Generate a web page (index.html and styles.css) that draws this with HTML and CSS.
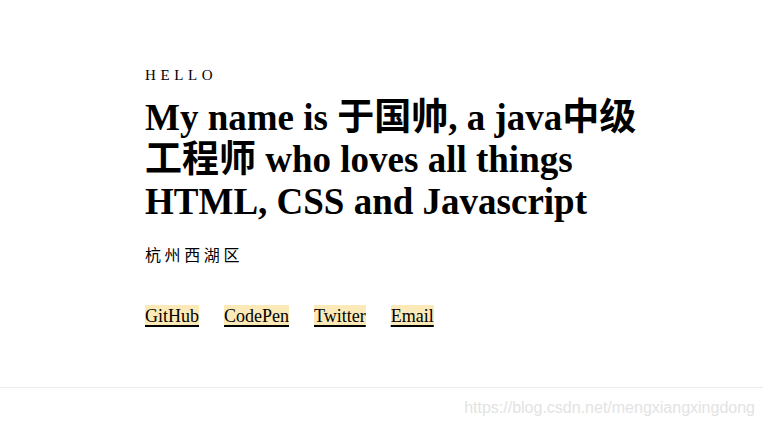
FILE: index.html
```html
<!DOCTYPE html>
<html lang="zh">
<head>
<meta charset="utf-8">
<title>Hello</title>
<link rel="stylesheet" href="styles.css">
</head>
<body>
<main class="intro">
  <p class="hello">HELLO</p>
  <h1 class="headline">My name is 于国帅, a java中级工程师 who loves all things HTML, CSS and Javascript</h1>
  <p class="location">杭州西湖区</p>
  <nav class="links">
    <a href="#">GitHub</a>
    <a href="#">CodePen</a>
    <a href="#">Twitter</a>
    <a href="#">Email</a>
  </nav>
</main>
<footer class="footer">
  <span class="watermark">https://blog.csdn.net/mengxiangxingdong</span>
</footer>
</body>
</html>
```
FILE: styles.css
```css
html, body {
  margin: 0;
  padding: 0;
  background: #fff;
  color: #000;
}
body {
  font-family: "Liberation Serif", "Noto Sans CJK SC", serif;
}
.intro {
  padding: 66px 0 0 145px;
  height: 387px;
  box-sizing: border-box;
}
.hello {
  margin: 0;
  font-size: 15px;
  letter-spacing: 4.6px;
  line-height: 18px;
}
.headline {
  margin: 13px 0 0;
  width: 510px;
  font-size: 37px;
  line-height: 42px;
  font-weight: bold;
  font-family: "Liberation Serif", "Noto Sans CJK SC", serif;
}
.location {
  margin: 22px 0 0;
  font-size: 16px;
  letter-spacing: 3.6px;
  line-height: 22px;
}
.links {
  margin-top: 38px;
  display: flex;
  gap: 25px;
  font-size: 18px;
}
.links a {
  color: #000;
  background: #fbe9b7;
  text-decoration: underline;
  text-decoration-thickness: 2px;
  text-underline-offset: 3px;
  line-height: 22px;
}
.footer {
  border-top: 1px solid #ececec;
  height: 39px;
  display: flex;
  justify-content: flex-end;
  align-items: center;
  padding-right: 8px;
}
.watermark {
  font-family: "Liberation Sans", sans-serif;
  font-size: 16px;
  color: #e3e3e3;
}
```
